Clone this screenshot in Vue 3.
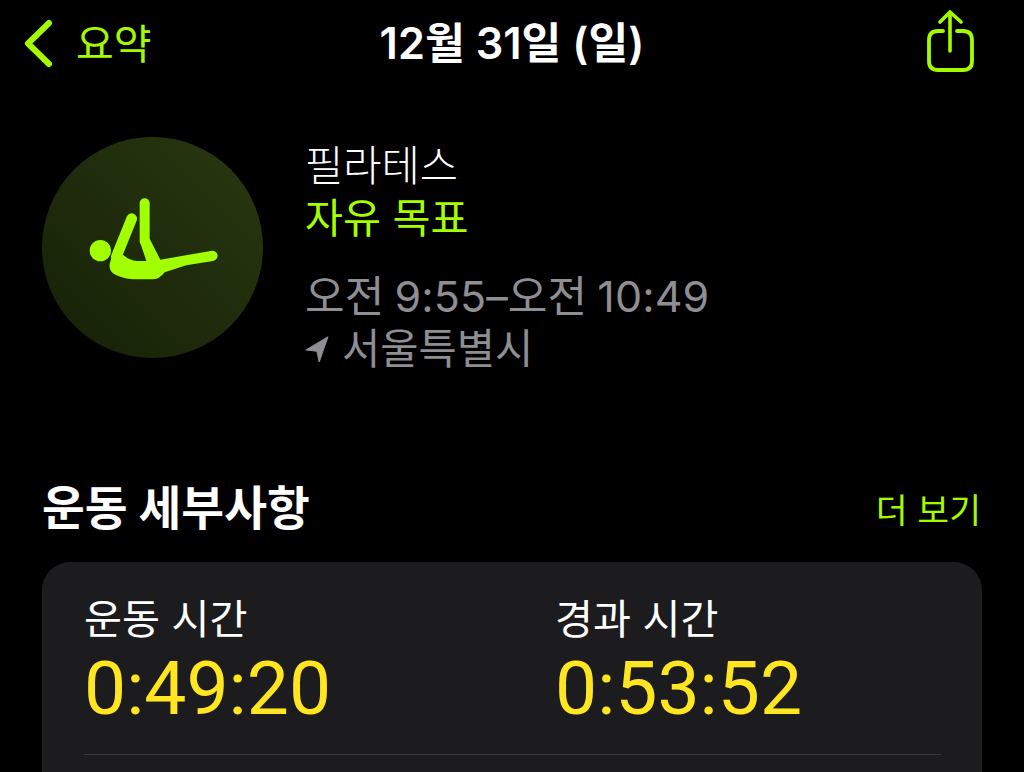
<script setup>
const stats = [
  { label: '운동 시간', value: '0:49:20' },
  { label: '경과 시간', value: '0:53:52' },
]
</script>

<template>
  <div class="page">
    <header class="nav">
      <div class="back">
        <svg class="chev" width="30" height="50" viewBox="0 0 30 50" aria-hidden="true">
          <path d="M26 4 L5 24.5 L26 45" fill="none" stroke="#a4fb00" stroke-width="6" stroke-linecap="round" stroke-linejoin="round" />
        </svg>
        <span class="back-label">요약</span>
      </div>
      <div class="nav-title">12월 31일 (일)</div>
      <svg class="share" width="50" height="64" viewBox="0 0 50 64" aria-hidden="true">
        <path d="M17 21 H12 Q3 21 3 30 V51 Q3 60 12 60 H37 Q46 60 46 51 V30 Q46 21 37 21 H31" fill="none" stroke="#a4fb00" stroke-width="3.8" stroke-linecap="round" />
        <path d="M24 41 V2 M14 12 L24 2 L35 12" fill="none" stroke="#a4fb00" stroke-width="3.6" stroke-linecap="round" stroke-linejoin="round" />
      </svg>
    </header>

    <section class="summary">
      <div class="badge">
        <svg width="221" height="221" viewBox="37 23 663 663" aria-hidden="true">
          <circle cx="212" cy="364" r="32" fill="#a2ff00" />
          <path d="M306 268 L260 382" stroke="#a2ff00" stroke-width="32" stroke-linecap="round" fill="none" />
          <path d="M345 222 V335" stroke="#a2ff00" stroke-width="30" stroke-linecap="round" fill="none" />
          <path d="M248 375 L282 378 Q300 394 322 395 L350 395 L330 335 L360 328 L392 391 L548 364 Q564 366 564 380 Q562 392 550 395 L470 408 L405 429 Q388 450 372 450 L310 450 Q268 446 250 432 Q238 422 240 404 Z" fill="#a2ff00" />
        </svg>
      </div>
      <div class="info">
        <div class="name">필라테스</div>
        <div class="goal">자유 목표</div>
        <div class="time">오전 9:55–오전 10:49</div>
        <div class="place">
          <svg width="24" height="26" viewBox="0 0 22 24" aria-hidden="true">
            <path d="M21 1 L1 13 L11 14 L13 24 Z" fill="#8e8e93" stroke="#8e8e93" stroke-width="1" stroke-linejoin="round" />
          </svg>
          <span>서울특별시</span>
        </div>
      </div>
    </section>

    <section class="details">
      <div class="section-head">
        <h2>운동 세부사항</h2>
        <span class="more">더 보기</span>
      </div>
      <div class="card">
        <div class="stats">
          <div v-for="s in stats" :key="s.label" class="stat">
            <div class="stat-label">{{ s.label }}</div>
            <div class="stat-value">{{ s.value }}</div>
          </div>
        </div>
        <div class="divider"></div>
      </div>
    </section>
  </div>
</template>

<style>
html, body { background: #000; margin: 0; }
</style>

<style scoped>
.page {
  width: 1024px;
  height: 772px;
  overflow: hidden;
  background: #000;
  font-family: Inter, "Noto Sans CJK KR", sans-serif;
  color: #fff;
  box-sizing: border-box;
  padding: 0 42px;
}
.nav {
  height: 88px;
  display: grid;
  grid-template-columns: 1fr auto 1fr;
  align-items: center;
}
.back { display: flex; align-items: center; margin-left: -19px; gap: 23px; color: #a4fb00; }
.back-label { font-size: 41px; line-height: 1; }
.nav-title { font-size: 43.3px; font-weight: 600; line-height: 1; }
.share { justify-self: end; margin-right: 6px; margin-top: -4px; }
.summary { display: flex; gap: 42px; margin-top: 49px; }
.badge {
  width: 221px;
  height: 221px;
  border-radius: 50%;
  background: linear-gradient(45deg, #152006, #2a3811);
  flex: none;
}
.badge svg { display: block; }
.info { display: flex; flex-direction: column; padding-top: 3px; }
.name { font-size: 41.6px; line-height: 52px; font-weight: 300; }
.goal { font-size: 41.3px; line-height: 52px; color: #a4ff00; font-weight: 400; }
.time { font-size: 43px; line-height: 52px; margin-top: 26px; color: #8e8e93; word-spacing: -2px; letter-spacing: 0.1px; }
.place { display: flex; align-items: center; gap: 13px; margin-top: 1px; color: #8e8e93; font-size: 41.6px; line-height: 52px; }
.details { margin-top: 103px; }
.section-head { display: flex; justify-content: space-between; align-items: center; height: 60px; }
h2 { margin: 0; font-size: 46.5px; font-weight: 700; line-height: 60px; }
.more { color: #a4fb00; font-size: 34.6px; margin-right: 1px; }
.card {
  margin-top: 24px;
  height: 300px;
  background: #1c1c1e;
  border-radius: 28px;
  padding: 32px 42px 0;
}
.stats { display: flex; }
.stat { flex: none; width: 471px; }
.stat-label { font-size: 41.3px; line-height: 52px; margin-top: -1px; }
.stat-value { font-family: Roboto, sans-serif; font-size: 75px; line-height: 84px; color: #ffe620; font-weight: 450; margin-top: 1px; }
.divider { height: 1px; background: #38383a; margin-top: 24px; width: 857px; }
</style>
